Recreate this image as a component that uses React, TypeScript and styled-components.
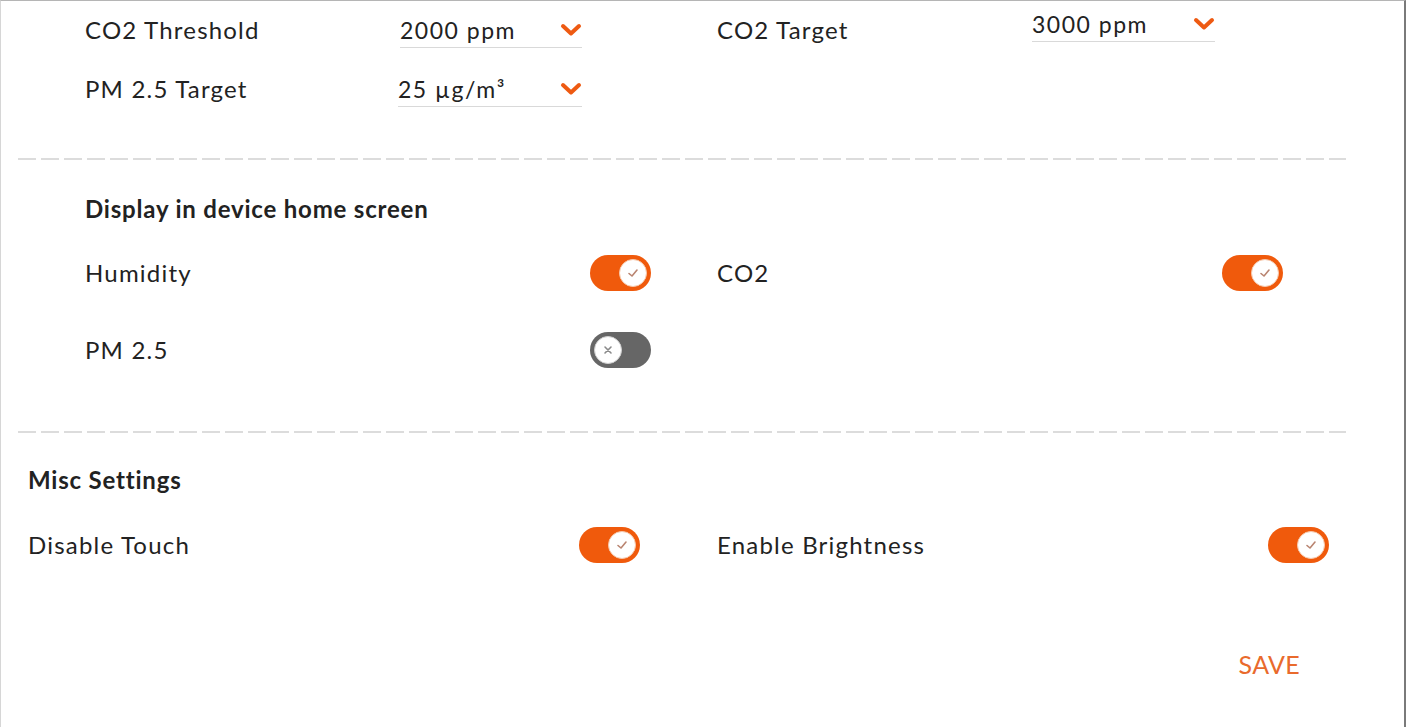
import React, { useState } from 'react';
import styled, { createGlobalStyle } from 'styled-components';

const GlobalStyle = createGlobalStyle`
  body {
    margin: 0;
    font-family: Lato, "Open Sans", sans-serif;
    color: #222;
    background: #fff;
  }
`;

const Panel = styled.div`
  width: 1406px;
  height: 727px;
  box-sizing: border-box;
  border-top: 1px solid #b5b5b5;
  border-left: 1px solid #d6d6d6;
  border-right: 2px solid #7a7a7a;
  padding-top: 9px;
`;

const SelectSection = styled.div`
  display: grid;
  grid-template-columns: 315px 182px 135px 315px 183px;
  grid-auto-rows: 40px;
  row-gap: 19px;
  padding-left: 84px;
  align-items: center;
`;

const Label = styled.div`
  font-size: 24px;
  line-height: 28px;
  letter-spacing: 1.2px;
  white-space: nowrap;
`;

const Dropdown = styled.div<{ $raise?: number; $shift?: number }>`
  display: flex;
  align-items: center;
  justify-content: space-between;
  height: 34px;
  margin-left: ${p => p.$shift ?? 0}px;
  border-bottom: 1px solid #d9d9d9;
  font-size: 23px;
  letter-spacing: 1.5px;
  transform: translateY(${p => -(p.$raise ?? 0)}px);
  cursor: pointer;
`;

const Divider = styled.div<{ $top: number }>`
  margin: ${p => p.$top}px 58px 0 17px;
  height: 2px;
  background-image: repeating-linear-gradient(
    to right,
    #dcdcdc 0,
    #dcdcdc 18px,
    transparent 18px,
    transparent 23px
  );
`;

const Heading = styled.div<{ $indent: number; $top: number }>`
  margin-top: ${p => p.$top}px;
  padding-left: ${p => p.$indent}px;
  font-size: 24px;
  line-height: 28px;
  letter-spacing: 0.8px;
  font-weight: 700;
`;

const ToggleGrid = styled.div<{ $indent: number; $cell: number; $top: number }>`
  display: grid;
  grid-template-columns: ${p => p.$cell}px ${p => p.$cell}px;
  column-gap: ${p => 716 - p.$indent - p.$cell}px;
  row-gap: 41px;
  margin-top: ${p => p.$top}px;
  padding-left: ${p => p.$indent}px;
`;

const ToggleRow = styled.div`
  display: flex;
  align-items: center;
  justify-content: space-between;
  height: 36px;
`;

const Track = styled.button<{ $on: boolean }>`
  position: relative;
  width: 61px;
  height: 36px;
  padding: 0;
  border: none;
  border-radius: 18px;
  background: ${p => (p.$on ? '#f05a0c' : '#666666')};
  cursor: pointer;
`;

const Knob = styled.span<{ $on: boolean }>`
  position: absolute;
  top: 4px;
  left: ${p => (p.$on ? '29px' : '4px')};
  width: 28px;
  height: 28px;
  border-radius: 50%;
  background: #fff;
  border: 1px solid ${p => (p.$on ? '#f6c9ad' : '#d0d0d0')};
  box-sizing: border-box;
  display: flex;
  align-items: center;
  justify-content: center;
`;

const Footer = styled.div`
  display: flex;
  justify-content: flex-end;
  margin-top: 86px;
  padding-right: 104px;
`;

const SaveButton = styled.button`
  border: none;
  background: none;
  padding: 0;
  font-family: Lato, "Open Sans", sans-serif;
  font-size: 25px;
  line-height: 30px;
  color: #e96a2c;
  letter-spacing: 0.3px;
  cursor: pointer;
`;

const Chevron = () => (
  <svg width="22" height="14" viewBox="0 0 22 14">
    <path d="M3 3 L11 10.5 L19 3" fill="none" stroke="#ee5a12" strokeWidth="4" strokeLinecap="round" strokeLinejoin="round" />
  </svg>
);

const Switch: React.FC<{ initial: boolean }> = ({ initial }) => {
  const [on, setOn] = useState(initial);
  return (
    <Track $on={on} onClick={() => setOn(!on)}>
      <Knob $on={on}>
        {on ? (
          <svg width="12" height="12" viewBox="0 0 12 12">
            <path d="M2 6.5 L5 9 L10 3" fill="none" stroke="#b98470" strokeWidth="1.6" strokeLinecap="round" strokeLinejoin="round" />
          </svg>
        ) : (
          <svg width="10" height="10" viewBox="0 0 10 10">
            <path d="M2 2 L8 8 M8 2 L2 8" fill="none" stroke="#8a8a8a" strokeWidth="1.6" strokeLinecap="round" />
          </svg>
        )}
      </Knob>
    </Track>
  );
};

export default function App() {
  return (
    <>
      <GlobalStyle />
      <Panel>
        <SelectSection>
          <Label>CO2 Threshold</Label>
          <Dropdown>
            2000 ppm <Chevron />
          </Dropdown>
          <span />
          <Label>CO2 Target</Label>
          <Dropdown $raise={6}>
            3000 ppm <Chevron />
          </Dropdown>
          <Label>PM 2.5 Target</Label>
          <Dropdown $shift={-2}>
            25 µg/m³ <Chevron />
          </Dropdown>
        </SelectSection>

        <Divider $top={49} />

        <Heading $indent={84} $top={35}>Display in device home screen</Heading>
        <ToggleGrid $indent={84} $cell={566} $top={32}>
          <ToggleRow>
            <Label>Humidity</Label>
            <Switch initial />
          </ToggleRow>
          <ToggleRow>
            <Label>CO2</Label>
            <Switch initial />
          </ToggleRow>
          <ToggleRow>
            <Label>PM 2.5</Label>
            <Switch initial={false} />
          </ToggleRow>
        </ToggleGrid>

        <Divider $top={63} />

        <Heading $indent={27} $top={33}>Misc Settings</Heading>
        <ToggleGrid $indent={27} $cell={612} $top={33}>
          <ToggleRow>
            <Label>Disable Touch</Label>
            <Switch initial />
          </ToggleRow>
          <ToggleRow>
            <Label>Enable Brightness</Label>
            <Switch initial />
          </ToggleRow>
        </ToggleGrid>

        <Footer>
          <SaveButton>SAVE</SaveButton>
        </Footer>
      </Panel>
    </>
  );
}
